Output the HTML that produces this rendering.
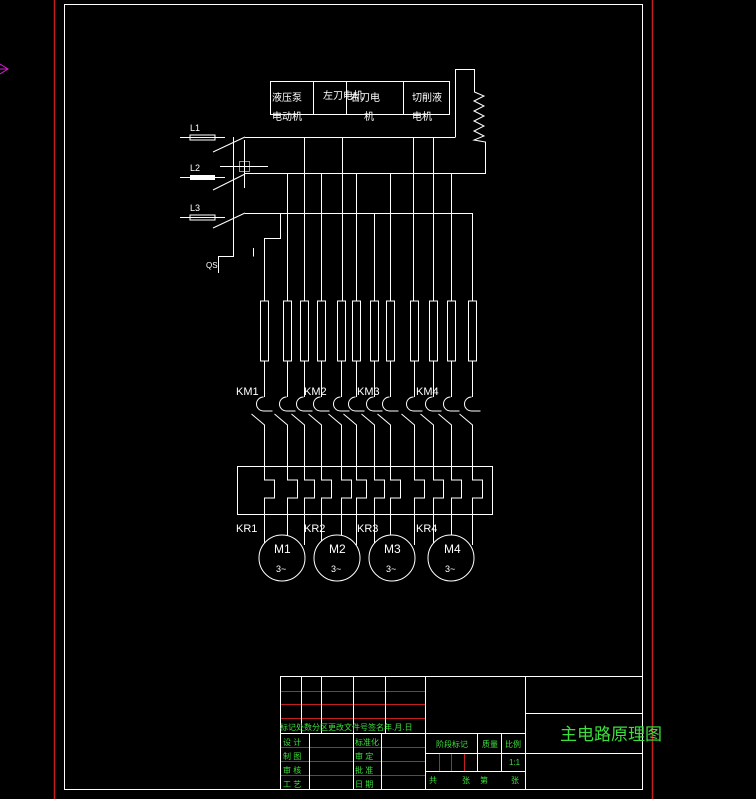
<!DOCTYPE html>
<html><head><meta charset="utf-8"><style>
html,body{margin:0;padding:0;background:#000;}
svg{display:block}
text{font-family:"Liberation Sans","Noto Sans CJK SC",sans-serif;}
</style></head><body>
<svg width="756" height="799" viewBox="0 0 756 799" xmlns="http://www.w3.org/2000/svg">
<rect width="756" height="799" fill="#000"/>
<line x1="54.5" y1="0" x2="54.5" y2="799" stroke="#c41e1e" stroke-width="1.5"/>
<line x1="652.5" y1="0" x2="652.5" y2="799" stroke="#c41e1e" stroke-width="1.5"/>
<path d="M0,64 L8,69 L0,74 M0,69 L8,69" stroke="#d020d0" fill="none"/>
<rect x="64.5" y="4.5" width="578" height="785" fill="none" stroke="#fff"/>
<g stroke="#fff" fill="none" stroke-width="1">
<!-- header box -->
<rect x="270.5" y="81.5" width="179" height="33"/>
<line x1="313.5" y1="81" x2="313.5" y2="114"/>
<line x1="346.5" y1="81" x2="346.5" y2="114"/>
<line x1="403.5" y1="81" x2="403.5" y2="114"/>
<!-- resistor box -->
<path d="M455.5,137 V69.5 H474.5 V92 L484,96 L474,101 L484,106 L474,111 L484,116 L474,121 L484,126 L474,131 L484,136 L474,140 L485.5,142 V173.5 H245"/>
<path d="M245,137.5 H455.5"/>
<path d="M245,213.5 H472"/>
<!-- switch blades -->
<path d="M213,152 L245,137 M213,190 L245,174 M213,228 L245,213"/>
<path d="M180,137.5 H225 M180,177.5 H225 M180,217.5 H225"/>
<path d="M233.5,137 V256.5 H218.5 V273 M253.5,248 V256.5"/>
<path d="M264.5,300 V238.5 H280.5 V213"/>
</g>
<rect x="190" y="135" width="25" height="5" fill="none" stroke="#fff"/>
<rect x="190" y="175" width="25" height="5" fill="#fff"/>
<rect x="190" y="215" width="25" height="5" fill="none" stroke="#fff"/>
<g fill="#fff" font-size="9">
<text x="190" y="131">L1</text><text x="190" y="171">L2</text><text x="190" y="211">L3</text>
<text x="206" y="268" font-size="8">QS</text>
</g>
<g fill="#fff" font-size="10">
<text x="272" y="101">液压泵</text><text x="272" y="120">电动机</text>
<text x="323" y="99">左刀电机</text><text x="350" y="101">右刀电</text><text x="364" y="120">机</text>
<text x="412" y="101">切削液</text><text x="412" y="120">电机</text>
</g>
<!-- crosshair -->
<g stroke="#3bd26a" fill="none"><rect x="239.5" y="161.5" width="10" height="10"/></g>
<g stroke="#fff"><line x1="220" y1="166.5" x2="268" y2="166.5"/><line x1="244.5" y1="140" x2="244.5" y2="188"/></g>
<!-- phase lines -->
<g stroke="#fff" fill="none">
<path d="M304.5,137 V301 M342.5,137 V301 M413.5,137 V301 M433.5,137 V301"/>
<path d="M287.5,173 V301 M321.5,173 V301 M356.5,173 V301 M390.5,173 V301 M451.5,173 V301"/>
<path d="M374.5,213 V301 M472.5,213 V301 M264.5,238 V301"/>
</g>
<g stroke="#fff" fill="none" id="ph">
<!-- generated per column below -->
</g>
<g stroke="#fff" fill="none">
<rect x="237.5" y="466.5" width="255" height="48"/>
</g>
<g stroke="#fff" fill="none">
<!-- columns: 264,287,304,321,341,356,374,390,414,433,451,472 -->
<g transform="translate(264.5,0)"><rect x="-4" y="301" width="8" height="60"/><path d="M0,361 V397 M-1,397 A7,7 0 0 0 -1,411 H8 M-13,414 L0,425 V480 H10 V498 H0 V545"/></g>
<g transform="translate(287.5,0)"><rect x="-4" y="301" width="8" height="60"/><path d="M0,361 V397 M-1,397 A7,7 0 0 0 -1,411 H8 M-13,414 L0,425 V480 H10 V498 H0 V545"/></g>
<g transform="translate(304.5,0)"><rect x="-4" y="301" width="8" height="60"/><path d="M0,361 V397 M-1,397 A7,7 0 0 0 -1,411 H8 M-13,414 L0,425 V480 H10 V498 H0 V545"/></g>
<g transform="translate(321.5,0)"><rect x="-4" y="301" width="8" height="60"/><path d="M0,361 V397 M-1,397 A7,7 0 0 0 -1,411 H8 M-13,414 L0,425 V480 H10 V498 H0 V545"/></g>
<g transform="translate(341.5,0)"><rect x="-4" y="301" width="8" height="60"/><path d="M0,361 V397 M-1,397 A7,7 0 0 0 -1,411 H8 M-13,414 L0,425 V480 H10 V498 H0 V545"/></g>
<g transform="translate(356.5,0)"><rect x="-4" y="301" width="8" height="60"/><path d="M0,361 V397 M-1,397 A7,7 0 0 0 -1,411 H8 M-13,414 L0,425 V480 H10 V498 H0 V545"/></g>
<g transform="translate(374.5,0)"><rect x="-4" y="301" width="8" height="60"/><path d="M0,361 V397 M-1,397 A7,7 0 0 0 -1,411 H8 M-13,414 L0,425 V480 H10 V498 H0 V545"/></g>
<g transform="translate(390.5,0)"><rect x="-4" y="301" width="8" height="60"/><path d="M0,361 V397 M-1,397 A7,7 0 0 0 -1,411 H8 M-13,414 L0,425 V480 H10 V498 H0 V545"/></g>
<g transform="translate(414.5,0)"><rect x="-4" y="301" width="8" height="60"/><path d="M0,361 V397 M-1,397 A7,7 0 0 0 -1,411 H8 M-13,414 L0,425 V480 H10 V498 H0 V545"/></g>
<g transform="translate(433.5,0)"><rect x="-4" y="301" width="8" height="60"/><path d="M0,361 V397 M-1,397 A7,7 0 0 0 -1,411 H8 M-13,414 L0,425 V480 H10 V498 H0 V545"/></g>
<g transform="translate(451.5,0)"><rect x="-4" y="301" width="8" height="60"/><path d="M0,361 V397 M-1,397 A7,7 0 0 0 -1,411 H8 M-13,414 L0,425 V480 H10 V498 H0 V545"/></g>
<g transform="translate(472.5,0)"><rect x="-4" y="301" width="8" height="60"/><path d="M0,361 V397 M-1,397 A7,7 0 0 0 -1,411 H8 M-13,414 L0,425 V480 H10 V498 H0 V545"/></g>
</g>
<!-- motors -->
<g stroke="#fff" fill="#000">
<circle cx="282" cy="558" r="23"/><circle cx="337" cy="558" r="23"/><circle cx="392" cy="558" r="23"/><circle cx="451" cy="558" r="23"/>
</g>
<g fill="#fff" font-size="12">
<text x="274" y="553">M1</text><text x="329" y="553">M2</text><text x="384" y="553">M3</text><text x="444" y="553">M4</text>
</g>
<g fill="#fff" font-size="9">
<text x="276" y="572">3~</text><text x="331" y="572">3~</text><text x="386" y="572">3~</text><text x="445" y="572">3~</text>
</g>
<g fill="#fff" font-size="11">
<text x="236" y="395">KM1</text><text x="304" y="395">KM2</text><text x="357" y="395">KM3</text><text x="416" y="395">KM4</text>
<text x="236" y="532">KR1</text><text x="304" y="532">KR2</text><text x="357" y="532">KR3</text><text x="416" y="532">KR4</text>
</g>
<!-- title block -->
<g stroke="#c41e1e" stroke-width="1">
<path d="M280,691.5 H425 M280,704.5 H425 M280,718.5 H425"/>
<path d="M280,747.5 H425 M280,761.5 H425 M280,775.5 H425"/>
<path d="M439.5,753 V771 M451.5,753 V771 M464.5,753 V771"/>
</g>
<g stroke="#fff" fill="none">
<rect x="280.5" y="676.5" width="362" height="113"/>
<path d="M425.5,676 V789 M525.5,676 V789 M525,713.5 H642 M525,753.5 H642"/>
<path d="M301.5,676 V733 M321.5,676 V733 M353.5,676 V733 M385.5,676 V733 M280,733.5 H525"/>
<path d="M309.5,733 V789 M353.5,733 V789 M381.5,733 V789"/>
<path d="M425,753.5 H525 M425,771.5 H525 M477.5,733 V771 M501.5,733 V771"/>
</g>
<g fill="#3be03b" font-size="8">
<text x="280" y="730">标记处数分区更改文件号签名年.月.日</text>
<text x="283" y="745">设 计</text><text x="283" y="759">制 图</text><text x="283" y="773">审 核</text><text x="283" y="787">工 艺</text>
<text x="355" y="745">标准化</text><text x="355" y="759">审 定</text><text x="355" y="773">批 准</text><text x="355" y="787">日 期</text>
<text x="436" y="747">阶段标记</text><text x="482" y="747">质量</text><text x="505" y="747">比例</text>
<text x="509" y="765">1:1</text>
<text x="429" y="783">共</text><text x="462" y="783">张</text><text x="480" y="783">第</text><text x="511" y="783">张</text>
</g>
<text x="560" y="740" fill="#3be03b" font-size="17" style="font-family:'Noto Sans CJK SC',sans-serif">主电路原理图</text>
</svg>
</body></html>
